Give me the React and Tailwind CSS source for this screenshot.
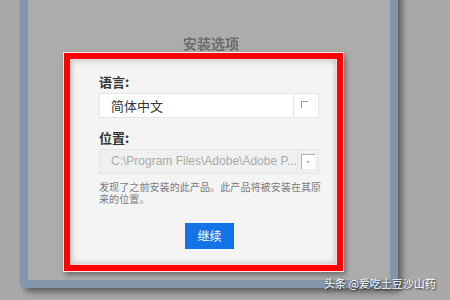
export default function App() {
    const font = { fontFamily: '"Noto Sans CJK SC", "Liberation Sans", sans-serif' }

    return (
        <div className="relative w-[450px] h-[300px] overflow-hidden bg-[#a9a9a9]" style={font}>
            {/* installer window */}
            <div className="ml-[20px] -mt-[10px] w-[378px] h-[298px] border-x-[8px] border-b-[8px] border-[#8396ac] rounded-b-[6px] bg-[#acacac] shadow-[4px_4px_6px_rgba(0,0,0,0.45)]">
                <div className="pt-[45px] pl-[155px] text-[14px] leading-[16px] font-bold text-[#6b6b6b] blur-[0.3px]">
                    安装选项
                </div>

                {/* options dialog */}
                <div className="ml-[35px] mt-[1px] w-[281px] h-[220px] border border-[#fde8e8] bg-[#ff0000] p-[6px] shadow-[2px_3px_5px_rgba(0,0,0,0.35)]">
                    <div className="h-full border border-[#f6d6d6] bg-[#f4f4f4] shadow-[inset_0_0_6px_rgba(0,0,0,0.25)] pl-[28px] pt-[14px]">
                        <div className="text-[13px] leading-[16px] font-bold text-[#333]">语言:</div>
                        <div className="mt-[3px] flex w-[220px] h-[25px] border border-[#e6e6e6] bg-white">
                            <div className="flex-1 pl-[11px] text-[13px] leading-[23px] text-[#333]">简体中文</div>
                            <div className="w-[25px] border-l border-[#e6e6e6] flex items-start justify-start pl-[7px] pt-[7px]">
                                <div className="w-[7px] h-[7px] border-l border-t border-[#9a9a9a]" />
                            </div>
                        </div>

                        <div className="mt-[12px] text-[13px] leading-[16px] font-bold text-[#333]">位置:</div>
                        <div className="mt-[3px] flex w-[220px] h-[25px] border border-[#e6e6e6] bg-[#f0f0f0]">
                            <div className="flex-1 pl-[11px] text-[12px] leading-[23px] text-[#aaaaaa] whitespace-nowrap" style={{ fontFamily: '"Liberation Sans", "Noto Sans CJK SC", sans-serif' }}>
                                C:\Program Files\Adobe\Adobe P...
                            </div>
                            <div className="w-[25px] border-l border-[#e6e6e6] flex items-center justify-center">
                                <div className="relative w-[14px] h-[15px] bg-white border-l border-t border-[#b0b0b0]">
                                    <div className="absolute left-[5px] top-[6px] w-[2px] h-[2px] rounded-full bg-[#f07a7a]" />
                                </div>
                            </div>
                        </div>

                        <div className="mt-[7px] w-[232px] text-[10px] tracking-[0.1px] leading-[12px] text-[#7a7a7a]">
                            发现了之前安装的此产品。此产品将被安装在其原来的位置。
                        </div>

                        <div className="mt-[18px] ml-[86px] w-[49px] h-[26px] bg-[#1473e6] text-white text-[12px] leading-[26px] text-center">
                            继续
                        </div>
                    </div>
                </div>
            </div>

            {/* watermark */}
            <div className="absolute left-[324px] top-[274px] text-[11px] leading-[18px] text-white [text-shadow:1px_1px_2px_rgba(0,0,0,0.8)] whitespace-nowrap">
                头条 @爱吃土豆沙山药
            </div>
        </div>
    )
}
